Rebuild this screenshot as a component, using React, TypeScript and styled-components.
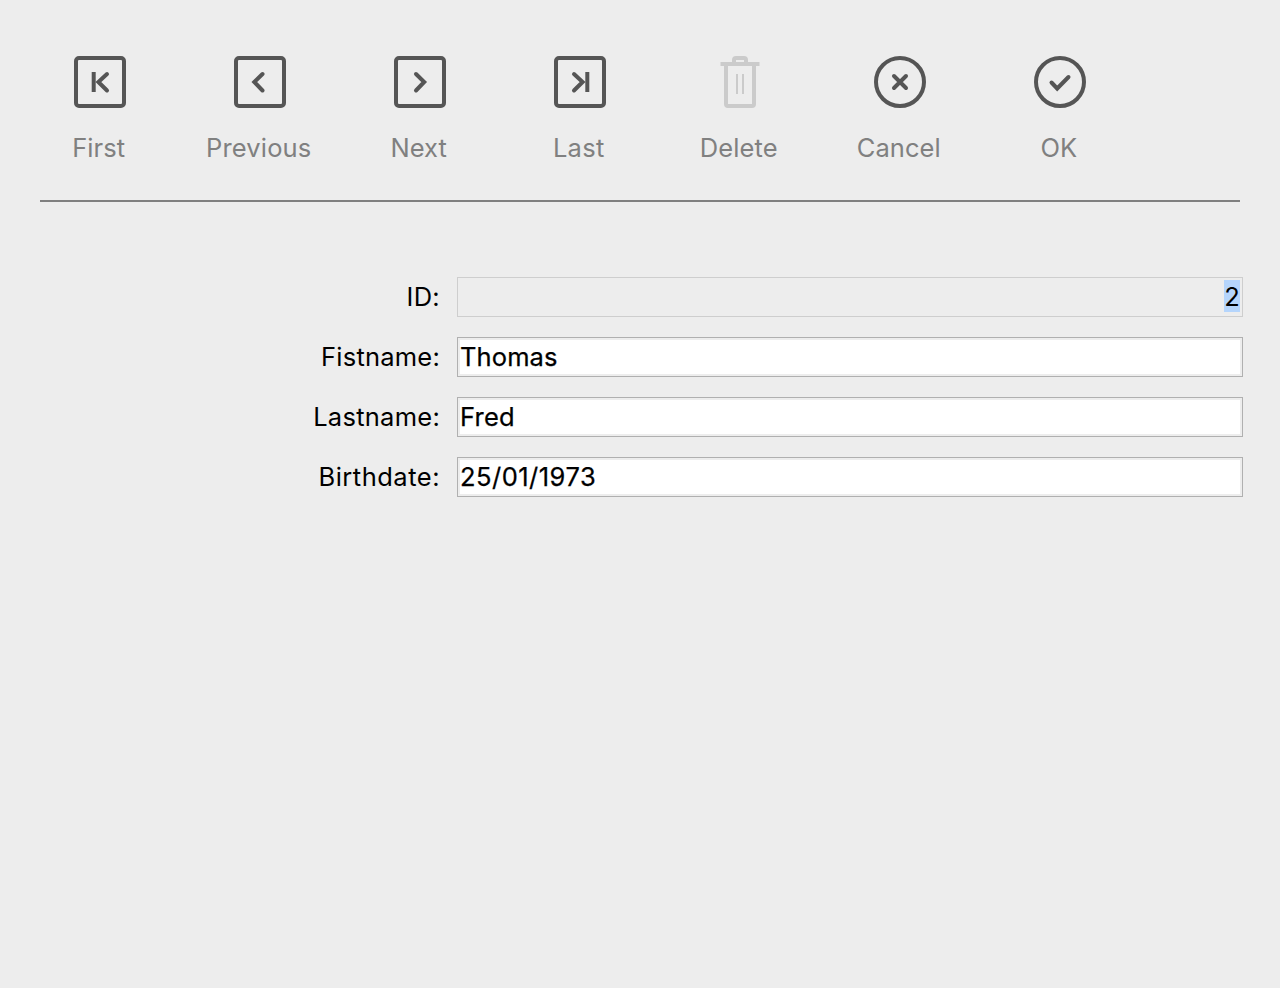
import React from "react";
import styled, { createGlobalStyle } from "styled-components";

const GlobalStyle = createGlobalStyle`
  *, *::before, *::after { box-sizing: border-box; }
  body {
    margin: 0;
    background: #ededed;
    color: #000;
    font-family: Inter, "Liberation Sans", sans-serif;
    font-size: 25.5px;
    line-height: 32px;
    font-feature-settings: "calt" 0;
  }
`;

const Window = styled.main`
  min-height: 988px;
  padding: 52px 37px 0 20px;
`;

const Toolbar = styled.nav`
  display: flex;
`;

const ToolButton = styled.button`
  width: 160px;
  padding: 0;
  border: 0;
  background: none;
  display: flex;
  flex-direction: column;
  align-items: center;
  gap: 20px;
  font: inherit;
  font-feature-settings: inherit;
  color: #808080;
`;

const Icon = styled.svg`
  width: 60px;
  height: 60px;
  fill: none;
  stroke: #555;
  stroke-width: 4;
  filter: blur(0.4px);
`;

const TrashIcon = styled(Icon)`
  stroke: #cbcbcb;
`;

const ToolLabel = styled.span<{ $spacing: number }>`
  margin-right: 2.5px;
  letter-spacing: ${(p) => p.$spacing}px;
  white-space: nowrap;
`;

const Divider = styled.hr`
  height: 2px;
  margin: 36px 3px 75px 20px;
  border: 0;
  background: #808080;
`;

const Form = styled.section`
  display: flex;
  flex-direction: column;
  gap: 20px;
`;

const Row = styled.div`
  display: grid;
  grid-template-columns: 420px 786px;
  column-gap: 17px;
  height: 40px;
`;

const FieldLabel = styled.span<{ $spacing: number }>`
  padding-top: 4px;
  text-align: right;
  letter-spacing: ${(p) => p.$spacing}px;
`;

const Field = styled.div<{ $spacing: number }>`
  padding: 3px 2px;
  border: 1px solid #b0b0b0;
  box-shadow: inset 0 0 0 2px #ededed;
  background: #fff;
  letter-spacing: ${(p) => p.$spacing}px;
  -webkit-text-stroke: 0.25px #000;
`;

const ReadOnlyField = styled.div`
  display: flex;
  justify-content: flex-end;
  padding: 2px;
  border: 1px solid #cecece;
`;

const Selection = styled.span`
  width: 16px;
  height: 32px;
  line-height: 34px;
  text-align: center;
  background: #b5d5fc;
`;

const box = <rect x="6" y="6" width="48" height="48" rx="3" />;
const ring = <circle cx="30" cy="30" r="24" />;

const tools = [
  { label: "First", spacing: 0.1, icon: <Icon viewBox="0 0 60 60">{box}<path d="M23.700 20v20" /><path strokeLinecap="round" d="M37 22l-8.600 8 8.600 8.500" /></Icon> },
  { label: "Previous", spacing: 0.15, icon: <Icon viewBox="0 0 60 60">{box}<path strokeLinecap="round" d="M32.500 22l-8.200 8 8.200 8.500" /></Icon> },
  { label: "Next", spacing: 0.05, icon: <Icon viewBox="0 0 60 60">{box}<path strokeLinecap="round" d="M26 22l8.200 8-8.200 8.500" /></Icon> },
  { label: "Last", spacing: 0.3, icon: <Icon viewBox="0 0 60 60">{box}<path strokeLinecap="round" d="M24 22l8.600 8-8.600 8.500" /><path d="M37.300 20v20" /></Icon> },
  {
    label: "Delete",
    spacing: 0.1,
    icon: (
      <TrashIcon viewBox="0 0 60 60">
        <path d="M10.500 12h39M16 12v40q0 2 2 2h24q2 0 2-2V12M24 12V8q0-2 2-2h8q2 0 2 2v4" />
        <path strokeWidth="2" d="M27 22v20M33 22v20" />
      </TrashIcon>
    ),
  },
  { label: "Cancel", spacing: 0.08, icon: <Icon viewBox="0 0 60 60">{ring}<path strokeLinecap="round" d="M24 24l12 12M36 24L24 36" /></Icon> },
  { label: "OK", spacing: 0, icon: <Icon viewBox="0 0 60 60">{ring}<path strokeLinecap="round" d="M21.500 30.500l5.700 6L38.500 25" /></Icon> },
];

const fields = [
  { label: "Fistname:", labelSpacing: 0.22, value: "Thomas", spacing: 0.1 },
  { label: "Lastname:", labelSpacing: 0.26, value: "Fred", spacing: 0.2 },
  { label: "Birthdate:", labelSpacing: 0.5, value: "25/01/1973", spacing: 0.48 },
];

export default function App() {
  return (
    <Window>
      <GlobalStyle />
      <Toolbar>
        {tools.map((t) => (
          <ToolButton key={t.label}>
            {t.icon}
            <ToolLabel $spacing={t.spacing}>{t.label}</ToolLabel>
          </ToolButton>
        ))}
      </Toolbar>
      <Divider />
      <Form>
        <Row>
          <FieldLabel $spacing={0.3}>ID:</FieldLabel>
          <ReadOnlyField><Selection>2</Selection></ReadOnlyField>
        </Row>
        {fields.map((f) => (
          <Row key={f.label}>
            <FieldLabel $spacing={f.labelSpacing}>{f.label}</FieldLabel>
            <Field $spacing={f.spacing}>{f.value}</Field>
          </Row>
        ))}
      </Form>
    </Window>
  );
}
